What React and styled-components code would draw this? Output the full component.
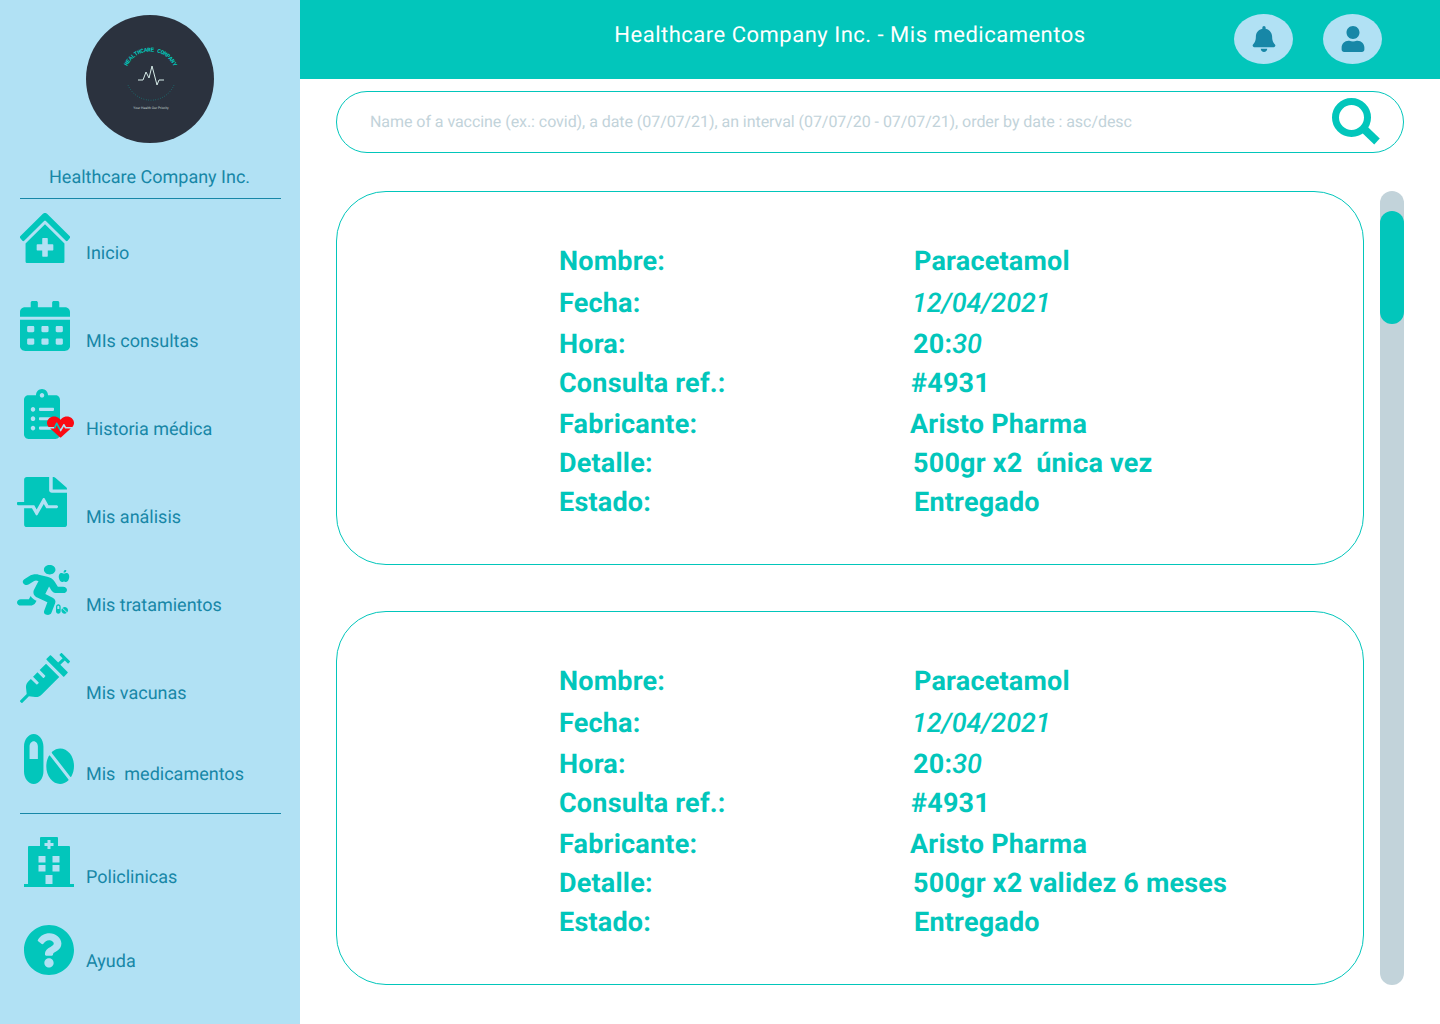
import React from "react";
import styled, { createGlobalStyle } from "styled-components";
import {
  FaClinicMedical,
  FaCalendarAlt,
  FaClipboardList,
  FaHeartbeat,
  FaFileMedicalAlt,
  FaRunning,
  FaAppleAlt,
  FaPills,
  FaSyringe,
  FaQuestionCircle,
  FaBell,
  FaUser,
} from "react-icons/fa";

const TEAL = "#02c6bb";
const SKY = "#b1e1f4";
const BLUE = "#1787a7";

const GlobalStyle = createGlobalStyle`
  html, body {
    margin: 0;
    padding: 0;
    background: #fff;
    font-family: Roboto, "Liberation Sans", sans-serif;
    text-rendering: geometricPrecision;
  }
  * {
    box-sizing: border-box;
  }
`;

const Page = styled.div`
  display: flex;
  width: 1440px;
  height: 1024px;
  overflow: hidden;
`;

const Sidebar = styled.aside`
  display: flex;
  flex-direction: column;
  flex: 0 0 300px;
  padding-top: 15px;
  background: ${SKY};
`;

const LogoWrap = styled.div`
  align-self: flex-start;
  width: 128px;
  height: 128px;
  margin-left: 86px;
`;

const CompanyName = styled.div`
  margin: 12px 0 0;
  padding-left: 49px;
  height: 43px;
  color: ${BLUE};
  font-size: 18px;
  line-height: 45px;
`;

const Divider = styled.div`
  flex: none;
  width: 261px;
  height: 1px;
  margin: ${(p) => p.$top || 0}px 0 0 20px;
  background: ${BLUE};
`;

const NavList = styled.nav`
  display: flex;
  flex-direction: column;
  padding-left: 20px;
  margin-top: ${(p) => p.$top}px;
`;

const NavRow = styled.div`
  display: flex;
  align-items: flex-end;
  height: 50px;
  margin-top: ${(p) => p.$top}px;
`;

const IconSlot = styled.div`
  position: relative;
  flex: none;
  width: 50px;
  height: 50px;
  margin-left: ${(p) => p.$shift}px;
  margin-right: ${(p) => 16 - p.$shift}px;
  color: ${TEAL};

  > svg:only-child {
    display: block;
    width: 100%;
    height: 100%;
  }
`;

const NavLabel = styled.span`
  margin-bottom: ${(p) => p.$lift ?? -1}px;
  color: ${BLUE};
  font-size: 18px;
  line-height: 21px;
  white-space: pre;
`;

const Clipboard = styled(FaClipboardList)`
  display: block;
  width: 36px;
  height: 50px;
`;

const HeartBadge = styled(FaHeartbeat)`
  position: absolute;
  left: 23px;
  top: 26px;
  width: 27px;
  height: 24px;
  color: #fb0a12;
`;

const Runner = styled(FaRunning)`
  display: block;
  width: 50px;
  height: 50px;
`;

const TinyApple = styled(FaAppleAlt)`
  position: absolute;
  left: 41px;
  top: 5px;
  width: 12px;
  height: 12px;
`;

const TinyPills = styled(FaPills)`
  position: absolute;
  left: 39px;
  top: 38px;
  width: 12px;
  height: 12px;
`;

const Main = styled.main`
  display: flex;
  flex-direction: column;
  flex: 1;
  min-width: 0;
`;

const Header = styled.header`
  display: flex;
  align-items: center;
  flex: none;
  height: 79px;
  padding: 0 58px 1px 0;
  background: ${TEAL};
`;

const Title = styled.h1`
  flex: 1;
  margin: 0 0 8px 166px;
  color: #fff;
  font-size: 22px;
  font-weight: 400;
  letter-spacing: 0.5px;
  text-align: center;
`;

const HeaderActions = styled.div`
  display: flex;
  gap: 30px;
`;

const RoundButton = styled.button`
  display: flex;
  align-items: center;
  justify-content: center;
  width: 59px;
  height: 50px;
  padding: 0;
  border: 0;
  border-radius: 50%;
  background: ${SKY};
  color: ${BLUE};

  svg {
    width: 24px;
    height: 26px;
  }
`;

const Content = styled.div`
  display: flex;
  flex-direction: column;
  padding: 12px 36px 0;
`;

const SearchBar = styled.div`
  display: flex;
  align-items: center;
  justify-content: space-between;
  height: 62px;
  padding: 0 22px 0 33px;
  border: 1px solid ${TEAL};
  border-radius: 31px;
`;

const Placeholder = styled.span`
  margin-bottom: 2px;
  color: #c2d3da;
  font-size: 16px;
  letter-spacing: -0.055px;
`;

const Results = styled.div`
  display: flex;
  gap: 16px;
  margin-top: 38px;
`;

const CardColumn = styled.div`
  display: flex;
  flex-direction: column;
  gap: 46px;
  width: 1028px;
`;

const Card = styled.section`
  height: 374px;
  padding: 53px 0 0 222px;
  border: 1px solid ${TEAL};
  border-radius: 50px;
`;

const Row = styled.div`
  display: flex;
  height: 32px;
  margin-top: ${(p) => p.$top}px;
  color: ${TEAL};
  font-size: 27px;
  font-weight: 700;
  line-height: 32px;
  letter-spacing: 0.2px;
  white-space: pre;
`;

const RowLabel = styled.span`
  flex: 0 0 352px;
`;

const RowValue = styled.span`
  margin-left: ${(p) => p.$inset}px;
`;

const Thin = styled.i`
  font-weight: 500;
  letter-spacing: -0.1px;
`;

const Scrollbar = styled.div`
  flex: none;
  width: 24px;
  height: 794px;
  padding-top: 20px;
  border-radius: 12px;
  background: #c2d3da;
`;

const Thumb = styled.div`
  height: 113px;
  border-radius: 12px;
  background: ${TEAL};
`;

const Logo = () => (
  <svg width="128" height="128" viewBox="0 0 128 128">
    <circle cx="64" cy="64" r="64" fill="#2b323e" />
    <path id="logoArc" d="M39 62 A25.5 25.5 0 0 1 90 62" fill="none" />
    <text fill={TEAL} fontSize="6" fontWeight="700" fontFamily="Liberation Mono, monospace" letterSpacing="-0.4">
      <textPath href="#logoArc" startOffset="50%" textAnchor="middle">
        HEALTHCARE COMPANY
      </textPath>
    </text>
    <path
      d="M52 65 H57 L60 57 L63 63 L66 51 L71 70 L73 65 H78"
      fill="none"
      stroke="#d7ece9"
      strokeWidth="1"
    />
    <path
      d="M42 70 A25 25 0 0 0 88 70"
      fill="none"
      stroke={TEAL}
      strokeWidth="0.6"
      strokeDasharray="0.6 1.8"
    />
    <text x="65" y="94" fill="#c9d3d6" fontSize="3.4" fontFamily="Roboto, sans-serif" textAnchor="middle">
      Your Health Our Priority
    </text>
  </svg>
);

const HospitalIcon = () => (
  <svg viewBox="0 0 50 50">
    <path
      fill="currentColor"
      fillRule="evenodd"
      d="M16 1a1 1 0 0 1 1-1h16a1 1 0 0 1 1 1v8h11a1 1 0 0 1 1 1v37h4v3H0v-3h4V10a1 1 0 0 1 1-1h11ZM23.5 3v3h-3v3h3v3h3V9h3V6h-3V3ZM14.5 19v6.5h7V19ZM28.5 19v6.5h7V19ZM14.5 28v6.5h7V28ZM28.5 28v6.5h7V28ZM21.5 38v9h7v-9Z"
    />
  </svg>
);

const SearchGlass = () => (
  <svg width="49" height="49" viewBox="0 0 49 49">
    <circle cx="19.5" cy="19.5" r="16" fill="none" stroke={TEAL} strokeWidth="7" />
    <path d="M32 31 L45 43.5" fill="none" stroke={TEAL} strokeWidth="8" strokeLinecap="butt" />
  </svg>
);

const navTop = [
  { label: "Inicio", shift: 0, top: 0, icon: <FaClinicMedical preserveAspectRatio="none" /> },
  { label: "MIs consultas", shift: 0, top: 38, icon: <FaCalendarAlt preserveAspectRatio="none" /> },
  {
    label: "Historia médica",
    shift: 4,
    top: 38,
    icon: (
      <>
        <Clipboard preserveAspectRatio="none" />
        <HeartBadge preserveAspectRatio="none" />
      </>
    ),
  },
  { label: "Mis análisis", shift: -3, top: 38, icon: <FaFileMedicalAlt preserveAspectRatio="none" /> },
  {
    label: "Mis tratamientos",
    shift: -3,
    top: 38,
    icon: (
      <>
        <Runner preserveAspectRatio="none" />
        <TinyApple />
        <TinyPills />
      </>
    ),
  },
  { label: "Mis vacunas", shift: 0, top: 38, icon: <FaSyringe preserveAspectRatio="none" /> },
  {
    label: "Mis  medicamentos",
    shift: 4,
    top: 31,
    icon: <FaPills viewBox="0 32 576 448" preserveAspectRatio="none" />,
  },
];

const navBottom = [
  { label: "Policlinicas", shift: 4, top: 0, icon: <HospitalIcon /> },
  {
    label: "Ayuda",
    shift: 4,
    top: 38,
    lift: 3,
    icon: <FaQuestionCircle viewBox="8 8 496 496" preserveAspectRatio="none" />,
  },
];

const NavItems = ({ items }) =>
  items.map((item) => (
    <NavRow key={item.label} $top={item.top}>
      <IconSlot $shift={item.shift}>{item.icon}</IconSlot>
      <NavLabel $lift={item.lift}>{item.label}</NavLabel>
    </NavRow>
  ));

const Medication = ({ detail }) => (
  <Card>
    <Row $top={0}>
      <RowLabel>Nombre:</RowLabel>
      <RowValue $inset={3}>Paracetamol</RowValue>
    </Row>
    <Row $top={10}>
      <RowLabel>Fecha:</RowLabel>
      <RowValue $inset={1}>
        <Thin>12/04/2021</Thin>
      </RowValue>
    </Row>
    <Row $top={9}>
      <RowLabel>Hora:</RowLabel>
      <RowValue $inset={2}>
        20:<Thin>30</Thin>
      </RowValue>
    </Row>
    <Row $top={7}>
      <RowLabel>Consulta ref.:</RowLabel>
      <RowValue $inset={0}>#4931</RowValue>
    </Row>
    <Row $top={9}>
      <RowLabel>Fabricante:</RowLabel>
      <RowValue $inset={-1}>Aristo Pharma</RowValue>
    </Row>
    <Row $top={7}>
      <RowLabel>Detalle:</RowLabel>
      <RowValue $inset={2}>{detail}</RowValue>
    </Row>
    <Row $top={7}>
      <RowLabel>Estado:</RowLabel>
      <RowValue $inset={3}>Entregado</RowValue>
    </Row>
  </Card>
);

export default function App() {
  return (
    <>
      <GlobalStyle />
      <Page>
        <Sidebar>
          <LogoWrap>
            <Logo />
          </LogoWrap>
          <CompanyName>Healthcare Company Inc.</CompanyName>
          <Divider />
          <NavList $top={14}>
            <NavItems items={navTop} />
          </NavList>
          <Divider $top={29} />
          <NavList $top={23}>
            <NavItems items={navBottom} />
          </NavList>
        </Sidebar>
        <Main>
          <Header>
            <Title>Healthcare Company Inc. - Mis medicamentos</Title>
            <HeaderActions>
              <RoundButton aria-label="Notificaciones">
                <FaBell />
              </RoundButton>
              <RoundButton aria-label="Perfil">
                <FaUser />
              </RoundButton>
            </HeaderActions>
          </Header>
          <Content>
            <SearchBar>
              <Placeholder>
                Name of a vaccine (ex.: covid), a date (07/07/21), an interval (07/07/20 - 07/07/21), order by date : asc/desc
              </Placeholder>
              <SearchGlass />
            </SearchBar>
            <Results>
              <CardColumn>
                <Medication detail="500gr x2  única vez" />
                <Medication detail="500gr x2 validez 6 meses" />
              </CardColumn>
              <Scrollbar>
                <Thumb />
              </Scrollbar>
            </Results>
          </Content>
        </Main>
      </Page>
    </>
  );
}
